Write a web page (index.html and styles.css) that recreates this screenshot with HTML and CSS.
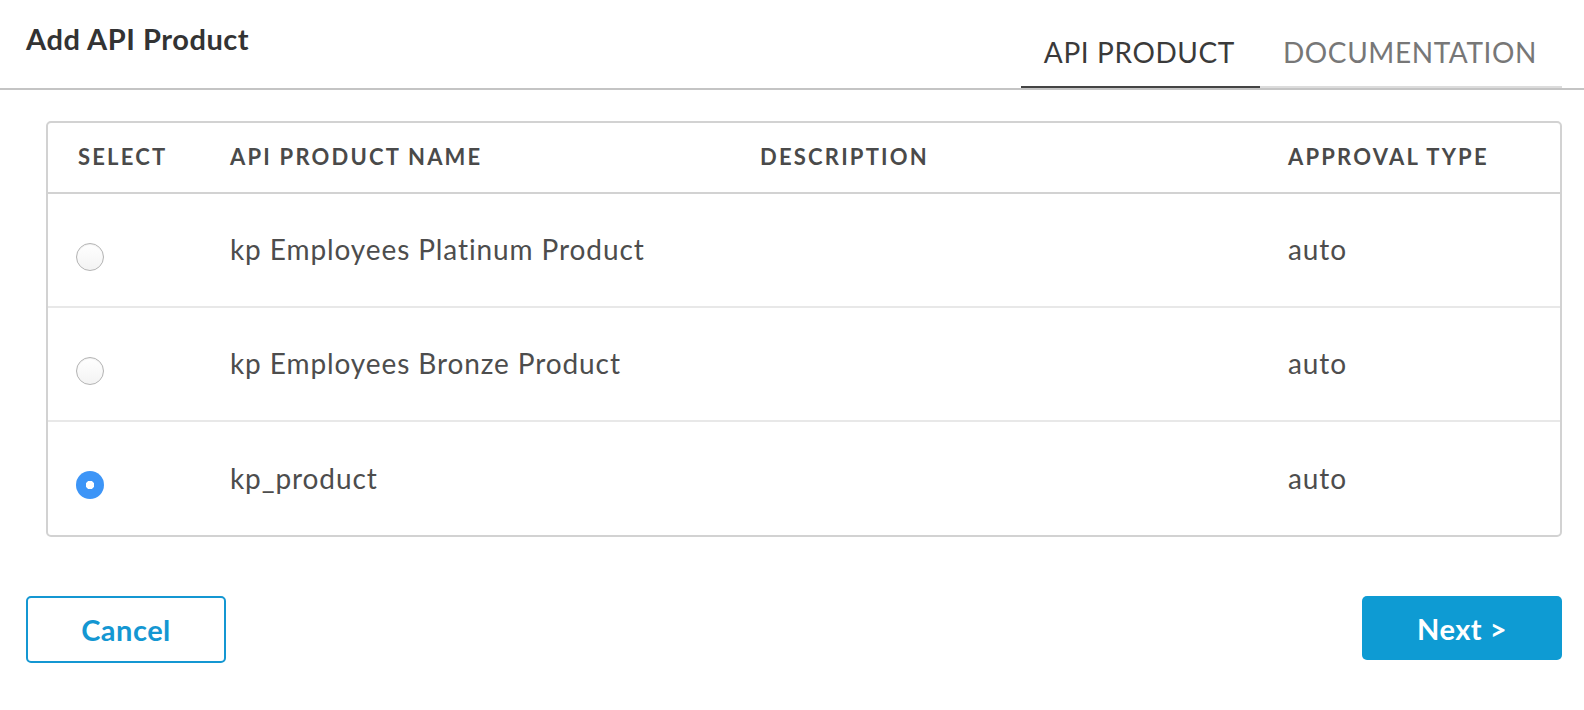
FILE: index.html
```html
<!DOCTYPE html>
<html>
<head>
<meta charset="utf-8">
<title>Add API Product</title>
<link rel="stylesheet" href="styles.css">
</head>
<body>
<div class="page">
  <header class="header">
    <h1 class="title">Add API Product</h1>
    <nav class="tabs">
      <div class="tab tab-active">API PRODUCT</div>
      <div class="tab">DOCUMENTATION</div>
    </nav>
  </header>

  <section class="table-wrap">
    <table class="products">
      <colgroup>
        <col class="c-select">
        <col class="c-name">
        <col class="c-desc">
        <col class="c-type">
      </colgroup>
      <thead>
        <tr>
          <th class="cell-first">SELECT</th>
          <th>API PRODUCT NAME</th>
          <th>DESCRIPTION</th>
          <th>APPROVAL TYPE</th>
        </tr>
      </thead>
      <tbody>
        <tr>
          <td class="cell-first"><span class="radio"></span></td>
          <td>kp Employees Platinum Product</td>
          <td></td>
          <td>auto</td>
        </tr>
        <tr>
          <td class="cell-first"><span class="radio"></span></td>
          <td>kp Employees Bronze Product</td>
          <td></td>
          <td>auto</td>
        </tr>
        <tr class="last">
          <td class="cell-first"><span class="radio radio-on"></span></td>
          <td>kp_product</td>
          <td></td>
          <td>auto</td>
        </tr>
      </tbody>
    </table>
  </section>

  <footer class="actions">
    <button class="btn btn-outline">Cancel</button>
    <button class="btn btn-primary">Next &gt;</button>
  </footer>
</div>
</body>
</html>
```

FILE: styles.css
```css
* { box-sizing: border-box; }

html, body {
  margin: 0;
  padding: 0;
  background: #ffffff;
}

body {
  font-family: Lato, "Open Sans", sans-serif;
  color: #4a4a4a;
}

.header {
  display: flex;
  justify-content: space-between;
  height: 90px;
  border-bottom: 2px solid #c4c4c4;
  padding: 0 22px 0 26px;
}

.title {
  margin: 0;
  padding-top: 22px;
  font-size: 29px;
  line-height: 1.2;
  font-weight: 700;
  letter-spacing: 0.55px;
  color: #333333;
}

.tabs {
  display: flex;
  align-self: flex-end;
}

.tab {
  font-size: 28px;
  line-height: 1.2;
  font-weight: 400;
  letter-spacing: 0.6px;
  color: #777777;
  padding: 0 25px 16px 23px;
  border-bottom: 2px solid #dcdcdc;
}

.tab-active {
  color: #3a3a3a;
  border-bottom-color: #444444;
}

.table-wrap {
  margin: 31px 22px 0 46px;
  border: 2px solid #d2d2d2;
  border-radius: 5px;
  overflow: hidden;
}

.products {
  width: 100%;
  border-collapse: collapse;
  table-layout: fixed;
}

.c-select { width: 182px; }
.c-name { width: 530px; }
.c-desc { width: 528px; }

.products th {
  height: 70px;
  text-align: left;
  vertical-align: middle;
  font-size: 22px;
  line-height: 1.2;
  font-weight: 700;
  letter-spacing: 2.2px;
  color: #4a4a4a;
  padding: 0;
  border-bottom: 2px solid #d2d2d2;
}

.products td {
  height: 114px;
  vertical-align: middle;
  font-size: 28px;
  line-height: 1.2;
  letter-spacing: 0.9px;
  color: #4d4d4d;
  padding: 0;
  border-bottom: 2px solid #e8e8e8;
}

.products tr.last td { border-bottom: none; height: 114px; }

.products .cell-first { padding-left: 30px; }

.radio {
  display: block;
  width: 28px;
  height: 28px;
  margin: 13px 0 0 -2px;
  border-radius: 50%;
  border: 1px solid #b4b4b4;
  background: linear-gradient(#ffffff, #f3f3f3);
  box-shadow: inset 0 1px 1px rgba(0,0,0,0.06);
}

.radio-on {
  border: none;
  background: radial-gradient(circle, #ffffff 0 4px, #3d95f7 4.5px);
  box-shadow: none;
}

.actions {
  display: flex;
  justify-content: space-between;
  align-items: flex-start;
  padding: 59px 22px 0 26px;
}

.btn {
  width: 200px;
  font-family: Lato, "Open Sans", sans-serif;
  font-size: 29px;
  font-weight: 700;
  letter-spacing: 0.5px;
  border-radius: 5px;
  cursor: pointer;
  padding: 0;
}

.btn-outline {
  height: 67px;
  background: #ffffff;
  color: #1497d2;
  border: 2px solid #1497d2;
}

.btn-primary {
  height: 64px;
  background: #0e9bd3;
  color: #ffffff;
  border: none;
}
```
